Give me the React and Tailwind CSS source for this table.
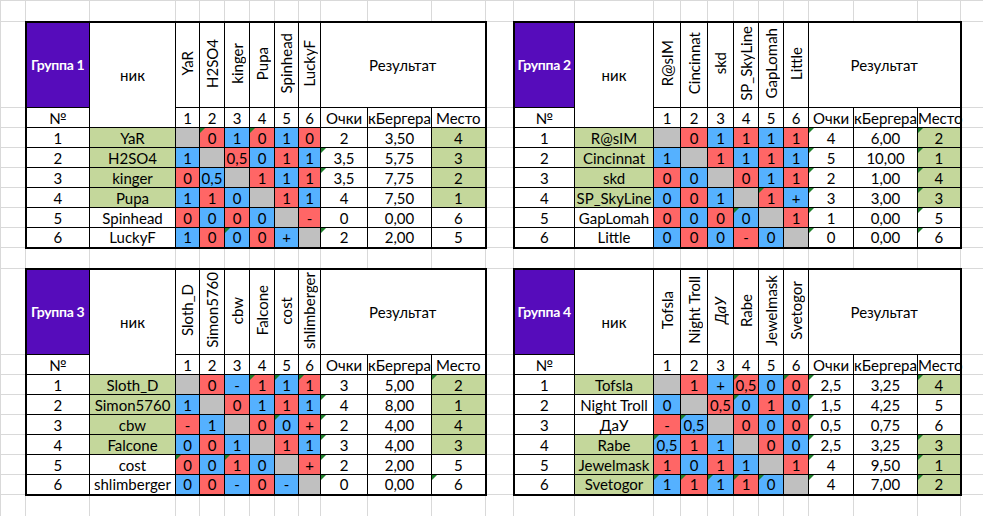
import clsx from "clsx";

const cols = [
  "w-[25px]", "w-[64px]", "w-[86px]", "w-[24px]", "w-[25px]", "w-[25px]", "w-[25px]", "w-[24px]", "w-[22px]",
  "w-[47px]", "w-[64px]", "w-[54px]", "w-[28px]", "w-[61px]", "w-[79px]", "w-[27px]", "w-[27px]", "w-[26px]",
  "w-[25px]", "w-[25px]", "w-[25px]", "w-[45px]", "w-[64px]", "w-[43px]", "w-[23px]",
];

const groups = [
  {
    title: "Группа 1",
    players: ["YaR", "H2SO4", "kinger", "Pupa", "Spinhead", "LuckyF"],
    nameGreen: [1, 1, 1, 1, 0, 0],
    grid: [
      "g r0 b1 r0 b1 r0",
      "b1 g r0,5 b0 r1 b1",
      "r0 b0,5 g r1 b1 r1",
      "b1 r1 b0 g r1 b1",
      "r0 b0 r0 b0 g r-",
      "b1 r0 b0 r0 b+ g",
    ],
    results: [["2", "3,50", "4"], ["3,5", "5,75", "3"], ["3,5", "7,75", "2"], ["4", "7,50", "1"], ["0", "0,00", "6"], ["2", "2,00", "5"]],
    marks: ["1-2", "1-4", "2-o", "3-o", "6-3", "6-o"],
  },
  {
    title: "Группа 2",
    players: ["R@sIM", "Cincinnat", "skd", "SP_SkyLine", "GapLomah", "Little"],
    nameGreen: [1, 1, 1, 1, 0, 0],
    grid: [
      "g r0 b1 r1 b1 r1",
      "b1 g r1 b1 r1 b1",
      "r0 b0 g r0 b1 r1",
      "b0 r0 b1 g r1 b+",
      "r0 b0 r0 b0 g r1",
      "b0 r0 b0 r- b0 g",
    ],
    results: [["4", "6,00", "2"], ["5", "10,00", "1"], ["2", "1,00", "4"], ["3", "3,00", "3"], ["1", "0,00", "5"], ["0", "0,00", "6"]],
    marks: ["4-5", "5-4", "1-o", "2-o", "3-o", "4-o", "5-o", "6-o", "1-m", "2-m", "3-m", "4-m", "5-m", "6-m"],
  },
  {
    title: "Группа 3",
    players: ["Sloth_D", "Simon5760", "cbw", "Falcone", "cost", "shlimberger"],
    nameGreen: [1, 1, 1, 1, 0, 0],
    grid: [
      "g r0 b- r1 b1 r1",
      "b1 g r0 b1 r1 b1",
      "r- b1 g r0 b0 r+",
      "b0 r0 b1 g r1 b1",
      "r0 b0 r1 b0 g r+",
      "b0 r0 b- r0 b- g",
    ],
    results: [["3", "5,00", "2"], ["4", "8,00", "1"], ["2", "4,00", "4"], ["3", "4,00", "3"], ["2", "2,00", "5"], ["0", "0,00", "6"]],
    marks: ["1-4", "1-5", "1-6", "2-o", "3-5", "3-o", "4-o", "5-1", "5-3", "5-o", "6-o", "1-m", "6-m"],
  },
  {
    title: "Группа 4",
    players: ["Tofsla", "Night Troll", "ДаУ", "Rabe", "Jewelmask", "Svetogor"],
    nameGreen: [1, 0, 0, 1, 1, 1],
    italic: [0, 0, 1, 0, 0, 0],
    grid: [
      "g r1 b+ r0,5 b0 r0",
      "b0 g r0,5 b0 r1 b0",
      "r- b0,5 g r0 b0 r0",
      "b0,5 r1 b1 g r0 b0",
      "r1 b0 r1 b1 g r1",
      "b1 r1 b1 r1 b0 g",
    ],
    results: [["2,5", "3,25", "4"], ["1,5", "4,25", "5"], ["0,5", "0,75", "6"], ["2,5", "3,25", "3"], ["4", "9,50", "1"], ["4", "7,00", "2"]],
    marks: ["1-4", "1-6", "2-4", "3-2", "4-1", "6-1", "6-2", "6-3", "6-4", "6-5", "1-o", "2-o", "3-o", "4-o", "5-o", "6-o", "1-m", "4-m", "5-m", "6-m"],
  },
];

const fills = { r: "bg-[#ff6666]", b: "bg-[#55b1ff]", g: "bg-[#c0c0c0]" };
const GREEN = "bg-[#c4d79b]";

const edge = (l, r, t, b) =>
  clsx("relative border border-black p-0 text-center", l && "border-l-2", r && "border-r-2", t && "border-t-2", b && "border-b-2");

// green error-indicator corner, like Excel draws it
const Mark = () => (
  <span className="absolute left-0 top-0 h-0 w-0 border-t-[5px] border-r-[5px] border-t-[#1d7f2a] border-r-transparent" />
);

const Blank = () => <td className="border border-[#d9d9d9] p-0" />;

const HeaderCells = ({ g }) => (
  <>
    <td className={clsx(edge(true, false, true, false), "whitespace-nowrap bg-[#560cbb] text-[14px] font-bold tracking-[-0.3px] text-white")}>
      {g.title}
    </td>
    <td rowSpan={2} className={edge(false, false, true, false)}>ник</td>
    {g.players.map((p, i) => (
      <td key={p} className={edge(false, false, true, false)}>
        <span className={clsx("inline-block rotate-180 whitespace-nowrap leading-none [writing-mode:vertical-rl]", g.italic && g.italic[i] && "italic")}>
          {p}
        </span>
      </td>
    ))}
    <td colSpan={3} className={edge(false, true, true, false)}>Результат</td>
  </>
);

const NumberCells = () => (
  <>
    <td className={edge(true, false, false, false)}>№</td>
    {[1, 2, 3, 4, 5, 6].map((n) => (
      <td key={n} className={edge(false, false, false, false)}>{n}</td>
    ))}
    <td className={edge(false, false, false, false)}>Очки</td>
    <td className={edge(false, false, false, false)}>кБергера</td>
    <td className={edge(false, true, false, false)}>Место</td>
  </>
);

const PlayerCells = ({ g, i }) => {
  const last = i === 5;
  const has = (k) => g.marks.includes(`${i + 1}-${k}`);
  const [pts, berger, place] = g.results[i];
  return (
    <>
      <td className={edge(true, false, false, last)}>{i + 1}</td>
      <td className={clsx(edge(false, false, false, last), g.nameGreen[i] && GREEN)}>{g.players[i]}</td>
      {g.grid[i].split(" ").map((c, j) => (
        <td key={j} className={clsx(edge(false, false, false, last), fills[c[0]])}>
          {has(j + 1) && <Mark />}
          {c.slice(1)}
        </td>
      ))}
      <td className={edge(false, false, false, last)}>
        {has("o") && <Mark />}
        {pts}
      </td>
      <td className={edge(false, false, false, last)}>{berger}</td>
      <td className={clsx(edge(false, true, false, last), Number(place) <= 4 && GREEN)}>
        {has("m") && <Mark />}
        {place}
      </td>
    </>
  );
};

const Band = ({ left, right }) => (
  <>
    <tr className="h-[86px]">
      <Blank />
      <HeaderCells g={left} />
      <Blank />
      <HeaderCells g={right} />
      <Blank />
    </tr>
    <tr className="h-[20px]">
      <Blank />
      <NumberCells />
      <Blank />
      <NumberCells />
      <Blank />
    </tr>
    {[0, 1, 2, 3, 4, 5].map((i) => (
      <tr key={i} className="h-[20px]">
        <Blank />
        <PlayerCells g={left} i={i} />
        <Blank />
        <PlayerCells g={right} i={i} />
        <Blank />
      </tr>
    ))}
  </>
);

const EmptyRow = ({ h }) => (
  <tr className={h}>
    {cols.map((c, i) => (
      <Blank key={i} />
    ))}
  </tr>
);

export default function App() {
  return (
    <div className="h-[516px] w-[983px] overflow-hidden bg-white font-[Lato,'Open_Sans',sans-serif] text-[15px] leading-[18px] text-black">
      <table className="w-[983px] table-fixed border-collapse">
        <colgroup>
          {cols.map((c, i) => (
            <col key={i} className={c} />
          ))}
        </colgroup>
        <tbody>
          <EmptyRow h="h-[21px]" />
          <Band left={groups[0]} right={groups[1]} />
          <EmptyRow h="h-[21px]" />
          <Band left={groups[2]} right={groups[3]} />
          <EmptyRow h="h-[22px]" />
        </tbody>
      </table>
    </div>
  );
}
